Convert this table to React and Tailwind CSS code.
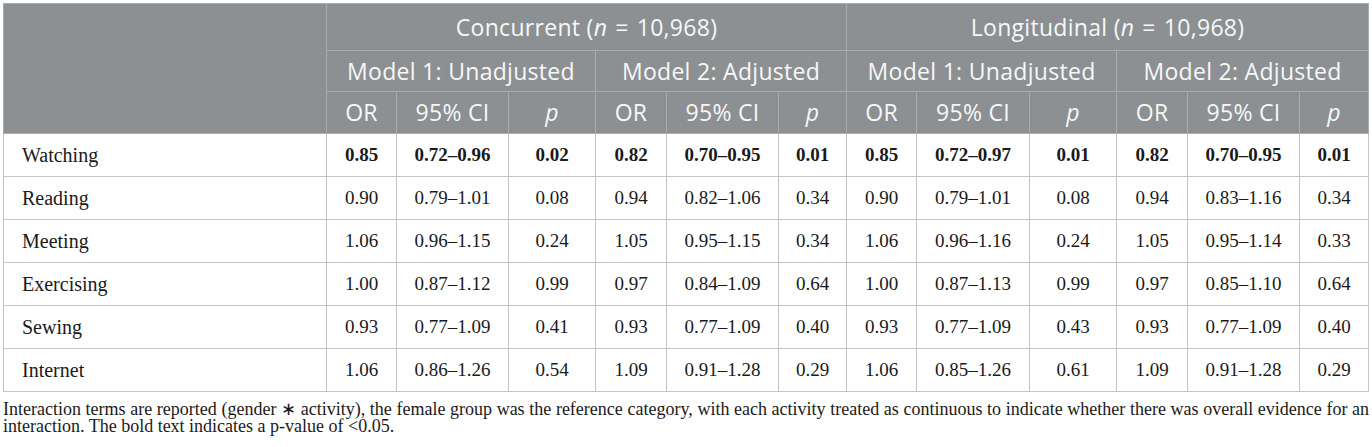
const rows = [
  ['Watching', ['0.85', '0.72–0.96', '0.02', '0.82', '0.70–0.95', '0.01', '0.85', '0.72–0.97', '0.01', '0.82', '0.70–0.95', '0.01'], true],
  ['Reading', ['0.90', '0.79–1.01', '0.08', '0.94', '0.82–1.06', '0.34', '0.90', '0.79–1.01', '0.08', '0.94', '0.83–1.16', '0.34']],
  ['Meeting', ['1.06', '0.96–1.15', '0.24', '1.05', '0.95–1.15', '0.34', '1.06', '0.96–1.16', '0.24', '1.05', '0.95–1.14', '0.33']],
  ['Exercising', ['1.00', '0.87–1.12', '0.99', '0.97', '0.84–1.09', '0.64', '1.00', '0.87–1.13', '0.99', '0.97', '0.85–1.10', '0.64']],
  ['Sewing', ['0.93', '0.77–1.09', '0.41', '0.93', '0.77–1.09', '0.40', '0.93', '0.77–1.09', '0.43', '0.93', '0.77–1.09', '0.40']],
  ['Internet', ['1.06', '0.86–1.26', '0.54', '1.09', '0.91–1.28', '0.29', '1.06', '0.85–1.26', '0.61', '1.09', '0.91–1.28', '0.29']],
];

const widths = [323, 70, 112, 87, 71, 112, 68, 70, 113, 87, 71, 112, 69];

function HeadCell({ children, span, h }) {
  return (
    <th colSpan={span} className={`border border-[#a9acae] font-normal text-center p-0 ${h}`}>
      {children}
    </th>
  );
}

export default function App() {
  const sub = ['OR', '95% CI', 'p'];
  return (
    <div className="bg-white px-[3px] pt-[3px] w-[1372px] h-[447px]">
      <table className="table-fixed border-collapse border border-[#b9b9b9] w-[1366px]">
        <colgroup>
          {widths.map((w, i) => (
            <col key={i} style={{ width: w }} />
          ))}
        </colgroup>
        <thead className="bg-[#8c9093] text-[#f7f7f7] text-[23px] tracking-[0.3px] font-['Open_Sans',sans-serif]">
          <tr>
            <th rowSpan={3} className="border border-[#a9acae] p-0"></th>
            <HeadCell span={6} h="h-[47px]">
              Concurrent (<span className="italic">n</span>
              <span className="mx-[8px]">=</span>10,968)
            </HeadCell>
            <HeadCell span={6} h="h-[47px]">
              Longitudinal (<span className="italic">n</span>
              <span className="mx-[8px]">=</span>10,968)
            </HeadCell>
          </tr>
          <tr>
            <HeadCell span={3} h="h-[41px]">Model 1: Unadjusted</HeadCell>
            <HeadCell span={3} h="h-[41px]">Model 2: Adjusted</HeadCell>
            <HeadCell span={3} h="h-[41px]">Model 1: Unadjusted</HeadCell>
            <HeadCell span={3} h="h-[41px]">Model 2: Adjusted</HeadCell>
          </tr>
          <tr>
            {[0, 1, 2, 3].flatMap((g) =>
              sub.map((s) => (
                <HeadCell key={g + s} h="h-[42px]">
                  {s === 'p' ? <span className="italic">p</span> : s}
                </HeadCell>
              ))
            )}
          </tr>
        </thead>
        <tbody className="text-[19px] text-[#1a1a1a] font-['Liberation_Serif',serif]">
          {rows.map(([label, vals, bold]) => (
            <tr key={label} className="h-[43px]">
              <td className="border border-[#c4c4c4] pl-[18px] p-0 text-[20px]">{label}</td>
              {vals.map((v, i) => (
                <td key={i} className={`border border-[#c4c4c4] text-center p-0 ${bold ? 'font-bold' : ''}`}>
                  {v}
                </td>
              ))}
            </tr>
          ))}
        </tbody>
      </table>
      <p className="mt-[9px] w-[1366px] text-[18px] leading-[17px] text-justify text-[#1a1a1a] font-['Liberation_Serif',serif]">
        Interaction terms are reported (gender ∗ activity), the female group was the reference category, with each activity treated as continuous to indicate whether there was overall evidence for an interaction. The bold text indicates a p-value of &lt;0.05.
      </p>
    </div>
  );
}
